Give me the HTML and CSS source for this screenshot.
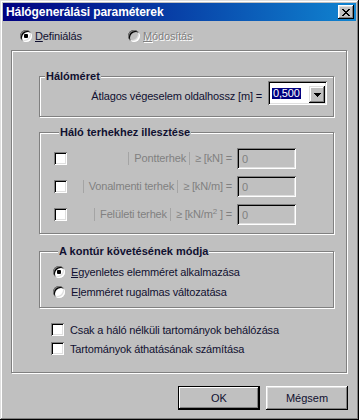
FILE: index.html
```html
<!DOCTYPE html>
<html lang="hu">
<head>
	<meta charset="utf-8">
	<title>Hálógenerálási paraméterek</title>
	<link rel="stylesheet" href="styles.css">
</head>
<body>
	<div class="window">
		<div class="titlebar">
			<span class="title">Hálógenerálási paraméterek</span>
			<span class="close">
				<svg width="8" height="7" viewBox="0 0 8 7" shape-rendering="crispEdges"><path d="M0 0h2v1H0zM6 0h2v1H6zM1 1h2v1H1zM5 1h2v1H5zM2 2h4v1H2zM3 3h2v1H3zM2 4h4v1H2zM1 5h2v1H1zM5 5h2v1H5zM0 6h2v1H0zM6 6h2v1H6z" fill="#000"/></svg>
			</span>
		</div>

		<!-- mód választás -->
		<div class="modes">
			<label class="opt first"><span class="radio on"></span><span><u>D</u>efiniálás</span></label>
			<label class="opt disabled"><span class="radio off"></span><span><u>M</u>ódosítás</span></label>
		</div>

		<div class="frame">
			<fieldset class="group g-size">
				<legend>Hálóméret</legend>
				<div class="size-row">
					<span class="size-label">Átlagos végeselem oldalhossz [m] =</span>
					<div class="combo">
						<span class="combo-value">0,500</span>
						<span class="combo-btn">
							<svg width="7" height="4" viewBox="0 0 7 4" shape-rendering="crispEdges"><path d="M0 0h7v1H0zM1 1h5v1H1zM2 2h3v1H2zM3 3h1v1H3z" fill="#000"/></svg>
						</span>
					</div>
				</div>
			</fieldset>

			<fieldset class="group g-loads">
				<legend>Háló terhekhez illesztése</legend>
				<div class="load-row">
					<span class="check"></span>
					<span class="load-name">Pontterhek</span>
					<span class="load-unit">≥ [kN] =</span>
					<input class="field" type="text" value="0" disabled>
				</div>
				<div class="load-row">
					<span class="check"></span>
					<span class="load-name">Vonalmenti terhek</span>
					<span class="load-unit">≥ [kN/m] =</span>
					<input class="field" type="text" value="0" disabled>
				</div>
				<div class="load-row">
					<span class="check"></span>
					<span class="load-name">Felületi terhek</span>
					<span class="load-unit">≥ [kN/m<sup>2</sup> ] =</span>
					<input class="field" type="text" value="0" disabled>
				</div>
			</fieldset>

			<fieldset class="group g-contour">
				<legend>A kontúr követésének módja</legend>
				<label class="radio-row"><span class="radio on"></span><span><u>E</u>gyenletes elemméret alkalmazása</span></label>
				<label class="radio-row"><span class="radio"></span><span>E<u>l</u>emméret rugalmas változatása</span></label>
			</fieldset>

			<div class="checks">
				<label class="check-row"><span class="check"></span><span>Csak a háló nélküli tartományok behálózása</span></label>
				<label class="check-row"><span class="check"></span><span>Tartományok áthatásának számítása</span></label>
			</div>
		</div>

		<div class="buttons">
			<button class="btn default">OK</button>
			<button class="btn">Mégsem</button>
		</div>
	</div>
</body>
</html>
```

FILE: styles.css
```css
*{
	margin:0;
	padding:0;
	box-sizing:border-box;
}

html, body {
	background: #c0c0c0;
	overflow: hidden;
}

body {
	font-family: "Liberation Sans", Arial, sans-serif;
	font-size: 11px;
	letter-spacing: -0.15px;
	color: #101030;
}

.window {
	width: 359px;
	height: 420px;
	padding: 3px;
	background: #c0c0c0;
	box-shadow: inset -1px -1px #000, inset 1px 1px #dfdfdf, inset -2px -2px #808080, inset 2px 2px #fff;
}

/* címsor */
.titlebar {
	height: 18px;
	display: flex;
	align-items: center;
	padding: 0 2px 0 3px;
	background: linear-gradient(to right, #000080, #1084d0);
}
.title {
	color: #fff;
	font-weight: bold;
	font-size: 12px;
	letter-spacing: -0.1px;
}
.close {
	margin-left: auto;
	width: 16px;
	height: 14px;
	display: flex;
	align-items: center;
	justify-content: center;
	background: #c0c0c0;
	box-shadow: inset -1px -1px #000, inset 1px 1px #fff, inset -2px -2px #808080, inset 2px 2px #dfdfdf;
}

.modes {
	height: 29px;
	display: flex;
	align-items: center;
	padding-left: 17px;
}
.opt {
	display: flex;
	align-items: center;
	gap: 3px;
}
.opt.first {
	width: 108px;
}
.disabled {
	color: #808080;
	text-shadow: 1px 1px #fff;
}

/* rádiógomb és jelölőnégyzet */
.radio {
	width: 12px;
	height: 12px;
	border-radius: 50%;
	background: #fff;
	box-shadow: inset 1px 1px #808080, inset -1px -1px #fff, inset 2px 2px #000, inset -2px -2px #dfdfdf;
	flex: none;
}
.radio.on {
	background: radial-gradient(circle, #000 0 2px, #fff 2.5px);
}
.radio.off {
	background: #c0c0c0;
}
.check {
	width: 13px;
	height: 13px;
	background: #fff;
	box-shadow: inset 1px 1px #808080, inset -1px -1px #fff, inset 2px 2px #000, inset -2px -2px #dfdfdf;
	flex: none;
}

.frame {
	height: 323px;
	margin: 0 9px 0 8px;
	border: 1px solid #808080;
	box-shadow: inset 1px 1px #fff, 1px 1px #fff;
}

/* csoportdobozok */
.group {
	width: 295px;
	min-width: 0;
	margin-left: 27px;
	border: 1px solid #808080;
	box-shadow: inset 1px 1px #fff, 1px 1px #fff;
}
.group legend {
	margin-left: 5px;
	padding: 0 1px;
	line-height: 13px;
	font-size: 11px;
	font-weight: bold;
	letter-spacing: 0;
	background: #c0c0c0;
}

/* hálóméret */
.g-size {
	margin-top: 19px;
	height: 47px;
}
.size-row {
	display: flex;
	justify-content: flex-end;
	margin-top: -2px;
	padding-right: 6px;
}
.size-label {
	margin: 9px 6px 0 0;
	line-height: 13px;
}
.combo {
	width: 59px;
	height: 24px;
	padding: 2px;
	display: flex;
	align-items: center;
	background: #fff;
	box-shadow: inset 1px 1px #808080, inset -1px -1px #fff, inset 2px 2px #000, inset -2px -2px #dfdfdf;
}
.combo-value {
	margin-left: 2px;
	padding: 0 1px;
	line-height: 11px;
	background: #000080;
	color: #fff;
}
.combo-btn {
	margin-left: auto;
	align-self: flex-end;
	width: 16px;
	height: 17px;
	display: flex;
	align-items: center;
	justify-content: center;
	background: #c0c0c0;
	box-shadow: inset -1px -1px #000, inset 1px 1px #dfdfdf, inset -2px -2px #808080, inset 2px 2px #fff;
}

/* terhek */
.g-loads {
	margin-top: 9px;
	height: 108px;
	padding: 9px 37px 0 14px;
}
.load-row {
	height: 21px;
	margin-bottom: 7px;
	display: flex;
	align-items: center;
	color: #808080;
}
.load-name {
	margin-left: auto;
	padding: 0 3px 0 5px;
	line-height: 13px;
	border-left: 1px solid #a4a4a4;
	border-right: 1px solid #a4a4a4;
}
.load-unit {
	margin-left: 5px;
	line-height: 13px;
}
.load-unit sup {
	font-size: 8px;
	vertical-align: 4px;
	line-height: 0;
}
.field {
	width: 59px;
	height: 21px;
	margin-left: 5px;
	padding-left: 5px;
	border: 0;
	outline: 0;
	font: inherit;
	color: #808080;
	background: #c0c0c0;
	box-shadow: inset 1px 1px #808080, inset -1px -1px #fff, inset 2px 2px #000, inset -2px -2px #dfdfdf;
}

/* kontúr */
.g-contour {
	margin-top: 11px;
	height: 63px;
	padding: 4px 0 0 13px;
}
.radio-row {
	height: 20px;
	display: flex;
	align-items: center;
	gap: 6px;
}

.checks {
	margin-top: 12px;
	padding-left: 39px;
}
.check-row {
	height: 19px;
	display: flex;
	align-items: center;
	gap: 6px;
}

.buttons {
	display: flex;
	justify-content: flex-end;
	gap: 6px;
	margin-top: 13px;
	padding-right: 8px;
}
.btn {
	width: 82px;
	height: 24px;
	border: 0;
	font: inherit;
	color: #101030;
	background: #c0c0c0;
	box-shadow: inset -1px -1px #000, inset 1px 1px #fff, inset -2px -2px #808080, inset 2px 2px #dfdfdf;
}
.btn.default {
	border: 1px solid #000;
	box-shadow: inset -1px -1px #000, inset 1px 1px #fff, inset -2px -2px #808080;
}
```
